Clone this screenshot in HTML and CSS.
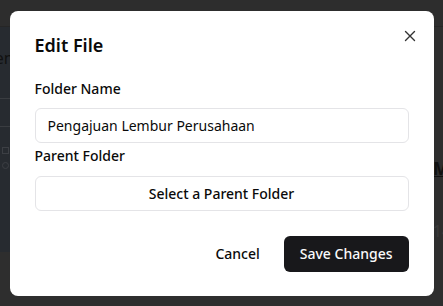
FILE: index.html
```html
<!DOCTYPE html>
<html lang="en">
<head>
<meta charset="utf-8">
<title>Edit File</title>
<link rel="stylesheet" href="styles.css">
</head>
<body>
<div class="page">
  <div class="topbar"></div>
  <div class="main">
    <aside class="sidebar">
      <div class="side-head"><span class="side-title">Dokumen</span></div>
      <div class="side-row"></div>
      <div class="side-icons"><span class="ico"></span><span class="ico round"></span></div>
    </aside>
    <section class="content">
      <div class="content-row"></div>
      <div class="content-time">PM</div>
      <div class="content-num">14</div>
    </section>
  </div>
</div>

<div class="overlay">
  <div class="modal" role="dialog">
    <button class="close" aria-label="Close">
      <svg width="12" height="12" viewBox="0 0 12 12"><path d="M1.5 1.5 L10.5 10.5 M10.5 1.5 L1.5 10.5" stroke="#333" stroke-width="1.4" stroke-linecap="round" fill="none"/></svg>
    </button>
    <h2 class="title">Edit File</h2>
    <label class="label label-first">Folder Name</label>
    <div class="input">Pengajuan Lembur Perusahaan</div>
    <label class="label label-second">Parent Folder</label>
    <button class="select">Select a Parent Folder</button>
    <div class="actions">
      <button class="btn ghost">Cancel</button>
      <button class="btn primary">Save Changes</button>
    </div>
  </div>
</div>
</body>
</html>
```
FILE: styles.css
```css
* { box-sizing: border-box; }
html, body { margin: 0; padding: 0; }
body {
  width: 443px;
  height: 306px;
  overflow: hidden;
  background: #2e2e2e;
  font-family: "Noto Sans", "Open Sans", sans-serif;
  position: relative;
}
.page { display: flex; flex-direction: column; height: 306px; }
.topbar { height: 27px; background: #2d2d2d; border-bottom: 1px solid #262626; }
.main { display: flex; flex: 1; }
.sidebar {
  width: 120px;
  height: 225px;
  background: #272b30;
  display: flex;
  flex-direction: column;
}
.side-head { height: 72px; border-bottom: 1px solid #3a3d41; display: flex; align-items: flex-start; padding-top: 20px; }
.side-title { color: #111; font-size: 16px; margin-left: -60px; }
.side-row { height: 28px; border-bottom: 1px solid #3a3d41; }
.side-icons { display: flex; flex-direction: column; gap: 8px; padding: 20px 0 0 2px; }
.ico { width: 7px; height: 7px; border: 1px solid #3c3f44; }
.ico.round { border-radius: 50%; }
.content { flex: 1; display: flex; flex-direction: column; align-items: flex-end; }
.content-row { width: 100%; height: 0; }
.content-time { margin-top: 130px; font-weight: 700; font-size: 17px; color: #111; text-decoration: underline; margin-right: -6px; }
.content-num { margin-top: 40px; color: #3a3a3a; font-size: 16px; margin-right: -8px; }

.overlay {
  position: absolute;
  inset: 0;
  display: flex;
  align-items: center;
  justify-content: center;
}
.modal {
  position: relative;
  width: 424px;
  height: 285px;
  background: #ffffff;
  border-radius: 8px;
  padding: 22px 25px 24px;
  display: flex;
  flex-direction: column;
}
.close {
  position: absolute;
  top: 19px;
  right: 18px;
  width: 12px;
  height: 12px;
  padding: 0;
  border: 0;
  background: none;
  display: flex;
}
.title {
  margin: 0;
  font-size: 18px;
  line-height: 24px;
  font-weight: 600;
  color: #0a0a0a;
}
.label {
  font-size: 14px;
  line-height: 20px;
  font-weight: 500;
  color: #0a0a0a;
}
.label-first { margin-top: 22px; }
.label-second { margin-top: 3px; }
.input {
  margin-top: 9px;
  height: 35px;
  border: 1px solid #e4e4e7;
  border-radius: 6px;
  padding: 0 12px;
  display: flex;
  align-items: center;
  font-size: 14px;
  color: #0a0a0a;
}
.select {
  margin-top: 10px;
  height: 35px;
  border: 1px solid #e4e4e7;
  border-radius: 6px;
  background: #fff;
  font-family: inherit;
  font-size: 14px;
  font-weight: 500;
  color: #0a0a0a;
}
.actions {
  margin-top: auto;
  display: flex;
  justify-content: flex-end;
  gap: 8px;
}
.btn {
  height: 36px;
  padding: 0 16px;
  border-radius: 6px;
  border: 0;
  font-family: inherit;
  font-size: 14px;
  font-weight: 500;
}
.ghost { background: transparent; color: #0a0a0a; }
.primary { background: #18181b; color: #fafafa; }
```
